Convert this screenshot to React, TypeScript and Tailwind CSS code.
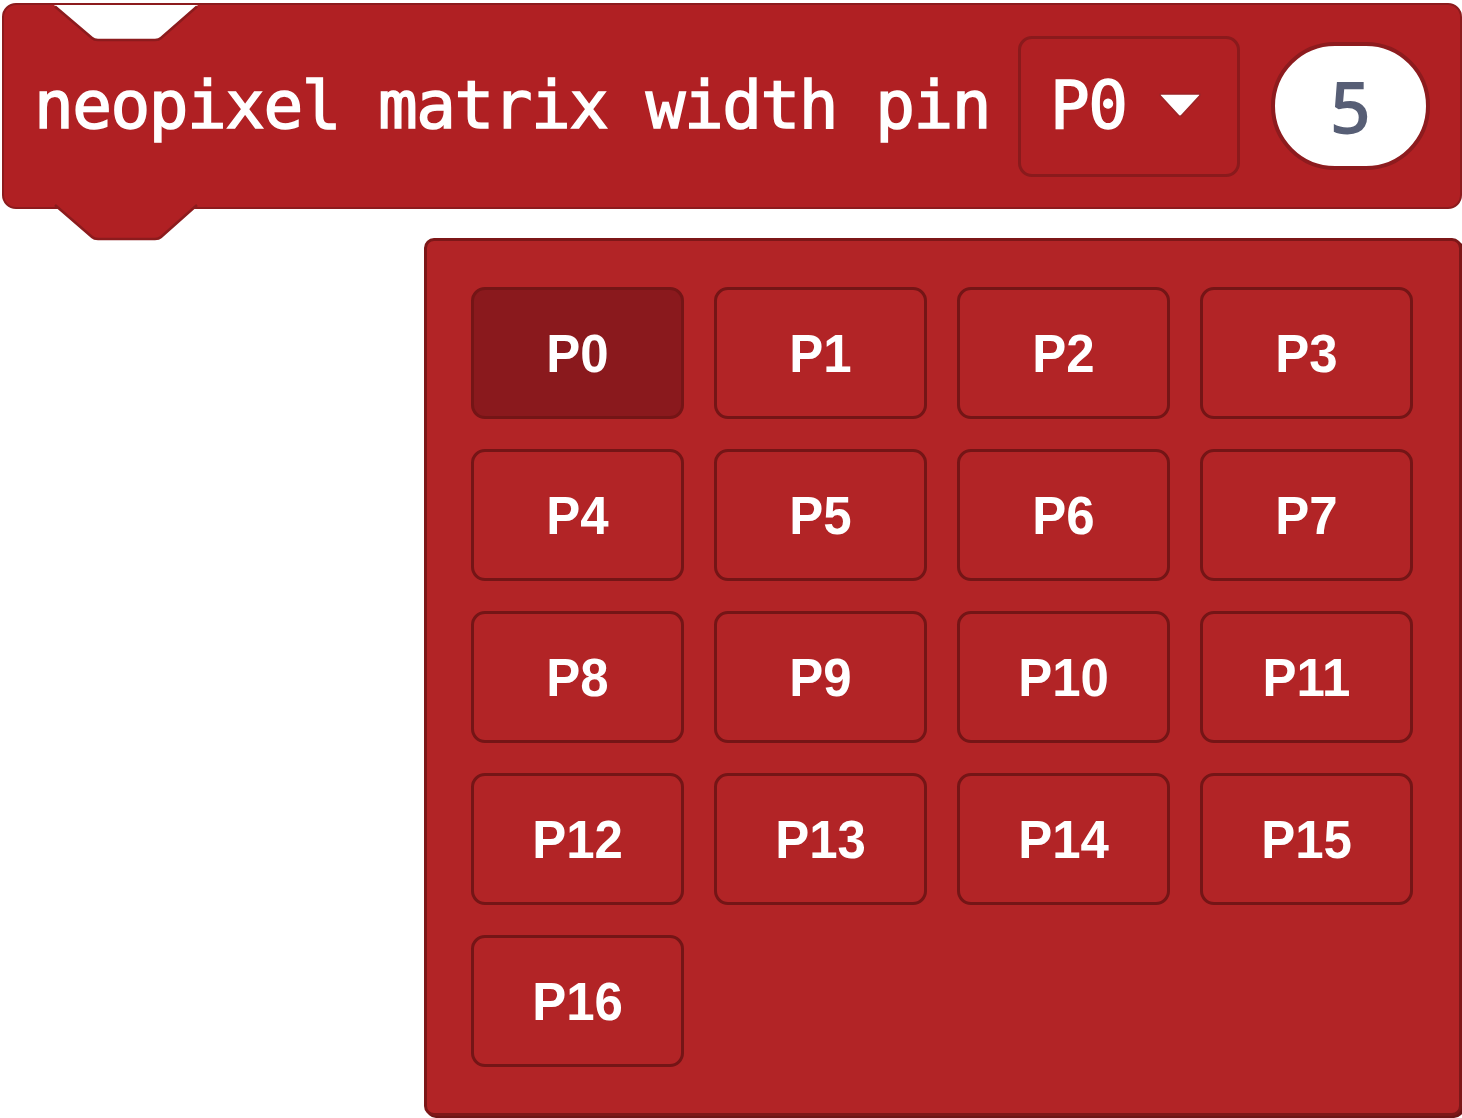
import React from 'react';

const PINS = Array.from({ length: 17 }, (_, i) => `P${i}`);

const BlockNotch: React.FC = () => (
  <svg className="absolute left-0 top-0" width="200" height="40" viewBox="0 0 200 40">
    <path d="M50 0 L88 33 Q90 35 94 35 L151 35 Q155 35 157 33 L194 0 Z" fill="#ffffff" />
    <path d="M51 1.5 L88 33 Q90 35 94 35 L151 35 Q155 35 157 33 L193 1.5" fill="none" stroke="#8c1b1d" strokeWidth="2.5" />
  </svg>
);

const BlockTab: React.FC = () => (
  <svg className="absolute left-0 top-full -mt-[3px]" width="200" height="40" viewBox="0 0 200 40">
    <path d="M51 0 L88 33 Q90 35 94 35 L151 35 Q155 35 157 33 L193 0 Z" fill="#b02023" />
    <path d="M51 1 L88 33 Q90 35 94 35 L151 35 Q155 35 157 33 L193 1" fill="none" stroke="#8c1b1d" strokeWidth="2.5" />
  </svg>
);

export default function App() {
  const selected = 'P0';

  return (
    <div className="w-[1462px] h-[1118px] bg-white overflow-hidden relative">
      <div className="pt-[3px] pl-[2px]">
        <div className="relative w-[1460px] h-[206px] bg-[#b02023] border-2 border-[#8c1b1d] rounded-[14px] flex items-center pl-[30px]">
          <BlockNotch />
          <span
            className="text-white text-[66px] leading-none tracking-[-1.5px] whitespace-pre [-webkit-text-stroke:1.5px_white]"
            style={{ fontFamily: '"DejaVu Sans Mono", monospace' }}
          >
            neopixel matrix width pin
          </span>
          <div className="ml-[28px] w-[222px] h-[141px] border-[3px] border-[#8a1a1c] rounded-[14px] flex items-center pl-[29px]">
            <span
              className="text-white text-[66px] leading-none tracking-[-1.5px] [-webkit-text-stroke:1.5px_white]"
              style={{ fontFamily: '"DejaVu Sans Mono", monospace' }}
            >
              P0
            </span>
            <svg className="ml-[32px]" width="44" height="28" viewBox="0 0 44 28">
              <path d="M3 2 L41 2 Q43 2 41.5 4 L24 23 Q22 25.5 20 23 L2.5 4 Q1 2 3 2 Z" fill="#ffffff" stroke="#9c2326" strokeWidth="1.5" />
            </svg>
          </div>
          <div className="ml-[31px] w-[159px] h-[128px] bg-white border-4 border-[#8d1b1e] rounded-full flex items-center justify-center">
            <span
              className="text-[#575e75] text-[72px] leading-none font-semibold"
              style={{ fontFamily: '"Open Sans", sans-serif' }}
            >
              5
            </span>
          </div>
          <BlockTab />
        </div>
      </div>

      <div className="ml-[424px] mt-[29px] w-[1038px] h-[878px] bg-[#b22426] border-[3px] border-[#7d1718] rounded-[10px] shadow-[2px_2px_0_#6e1415] pt-[46px] pl-[44px]">
        <div className="grid grid-cols-[repeat(4,213px)] gap-x-[30px] gap-y-[30px]">
          {PINS.map(pin => (
            <div
              key={pin}
              className={`h-[132px] rounded-[14px] border-[3px] border-[#741516] flex items-center justify-center ${pin === selected ? 'bg-[#8a191d]' : 'bg-[#b22426]'}`}
            >
              <span
                className="text-white text-[51px] font-bold leading-none scale-y-[1.06]"
                style={{ fontFamily: '"Liberation Sans", Arial, sans-serif' }}
              >
                {pin}
              </span>
            </div>
          ))}
        </div>
      </div>
    </div>
  );
}
